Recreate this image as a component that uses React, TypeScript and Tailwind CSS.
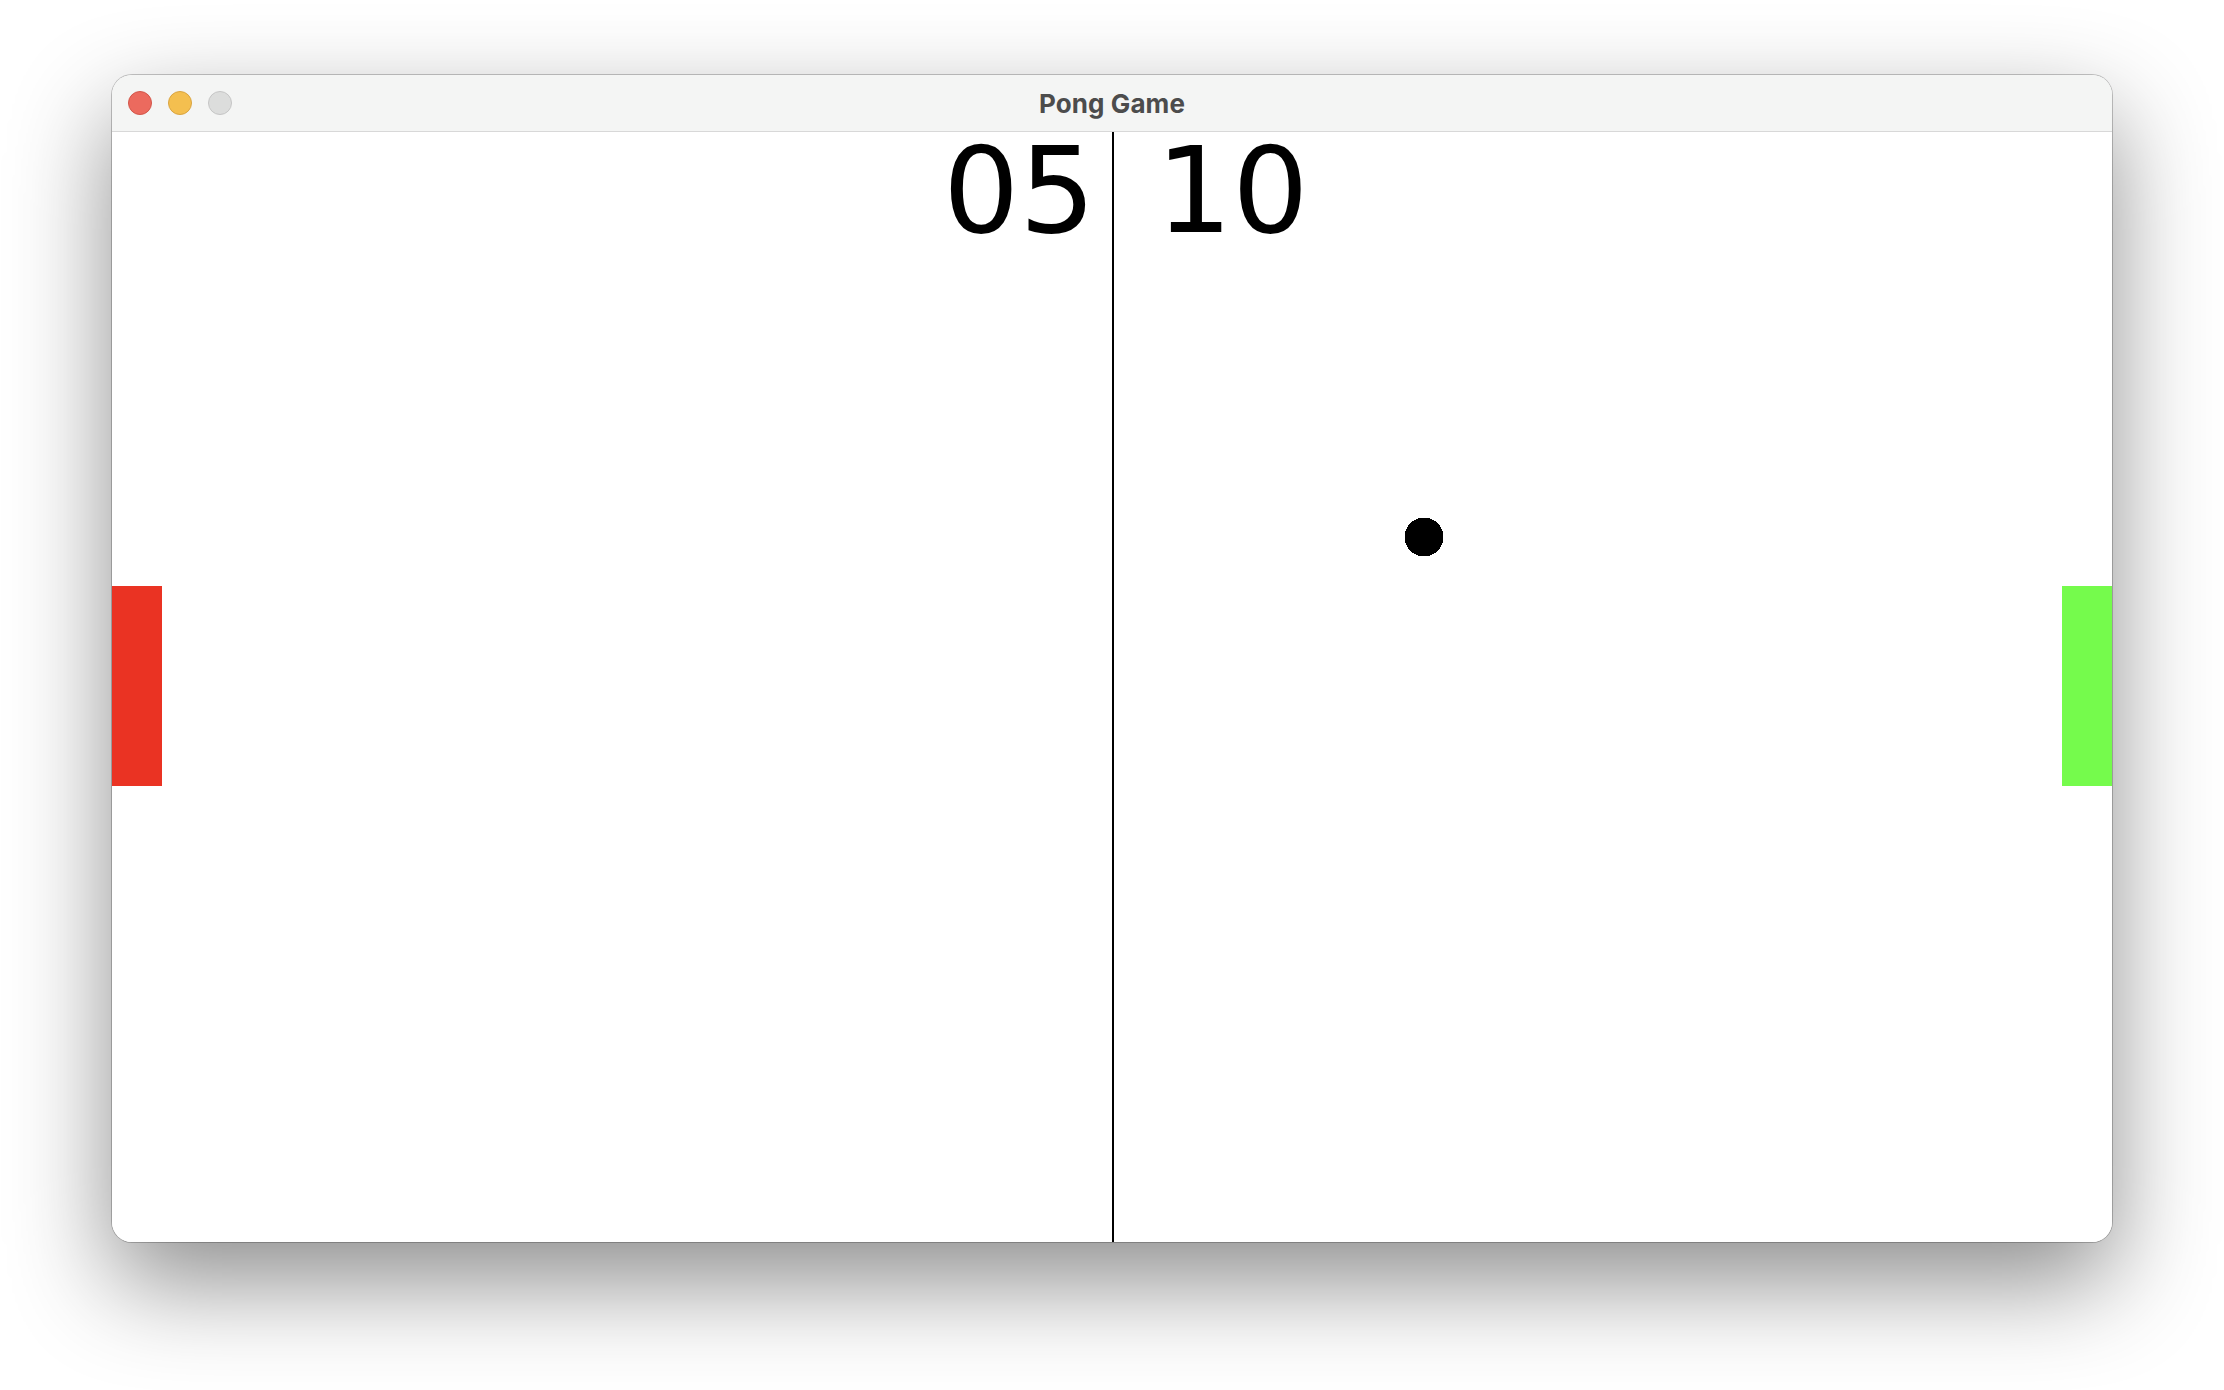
import React from 'react';

const TrafficLights: React.FC = () => (
  <div className="flex items-center gap-4 pl-4">
    <div className="w-6 h-6 rounded-full bg-[#ec6a5e] border border-[#d2564a]" />
    <div className="w-6 h-6 rounded-full bg-[#f4bf4f] border border-[#d9a441]" />
    <div className="w-6 h-6 rounded-full bg-[#dcdddc] border border-[#c5c5c5]" />
  </div>
);

const App: React.FC = () => {
  const ball = { x: 1292, y: 385, size: 40 };

  return (
    <div className="w-[2224px] h-[1390px] bg-white pt-[75px] pl-[112px] overflow-hidden">
      <div className="w-[2000px] rounded-[20px] overflow-hidden bg-white shadow-[0_0_0_1px_rgba(0,0,0,0.22),0_40px_100px_rgba(0,0,0,0.45)]">
        {/* title bar */}
        <div className="relative h-[57px] bg-[#f4f5f4] border-b border-[#d8d8d8] flex items-center">
          <TrafficLights />
          <div className="absolute inset-0 flex items-center justify-center">
            <span className="text-[26px] font-bold text-[#4c4c4c] font-['Inter','Noto_Sans',sans-serif] tracking-[0.1px]">
              Pong Game
            </span>
          </div>
        </div>

        {/* game canvas */}
        <div className="relative h-[1110px] bg-white overflow-hidden font-['DejaVu_Sans',sans-serif] text-black">
          <div className="absolute top-0 bottom-0 left-[1000px] w-[2px] bg-black" />

          <span className="absolute left-[831px] top-0 text-[120px] leading-[117px]">05</span>
          <span className="absolute left-[1044px] top-0 text-[120px] leading-[117px]">10</span>

          {/* paddles */}
          <div className="absolute left-0 top-[454px] w-[50px] h-[200px] bg-[#ea3323]" />
          <div className="absolute right-0 top-[454px] w-[50px] h-[200px] bg-[#75fb4c]" />

          {/* ball */}
          <svg
            className="absolute"
            style={{ left: ball.x, top: ball.y }}
            width={ball.size}
            height={ball.size}
            viewBox="0 0 40 40"
            shapeRendering="crispEdges"
          >
            <circle cx="20" cy="20" r="19.5" fill="#000" />
          </svg>
        </div>
      </div>
    </div>
  );
};

export default App;
